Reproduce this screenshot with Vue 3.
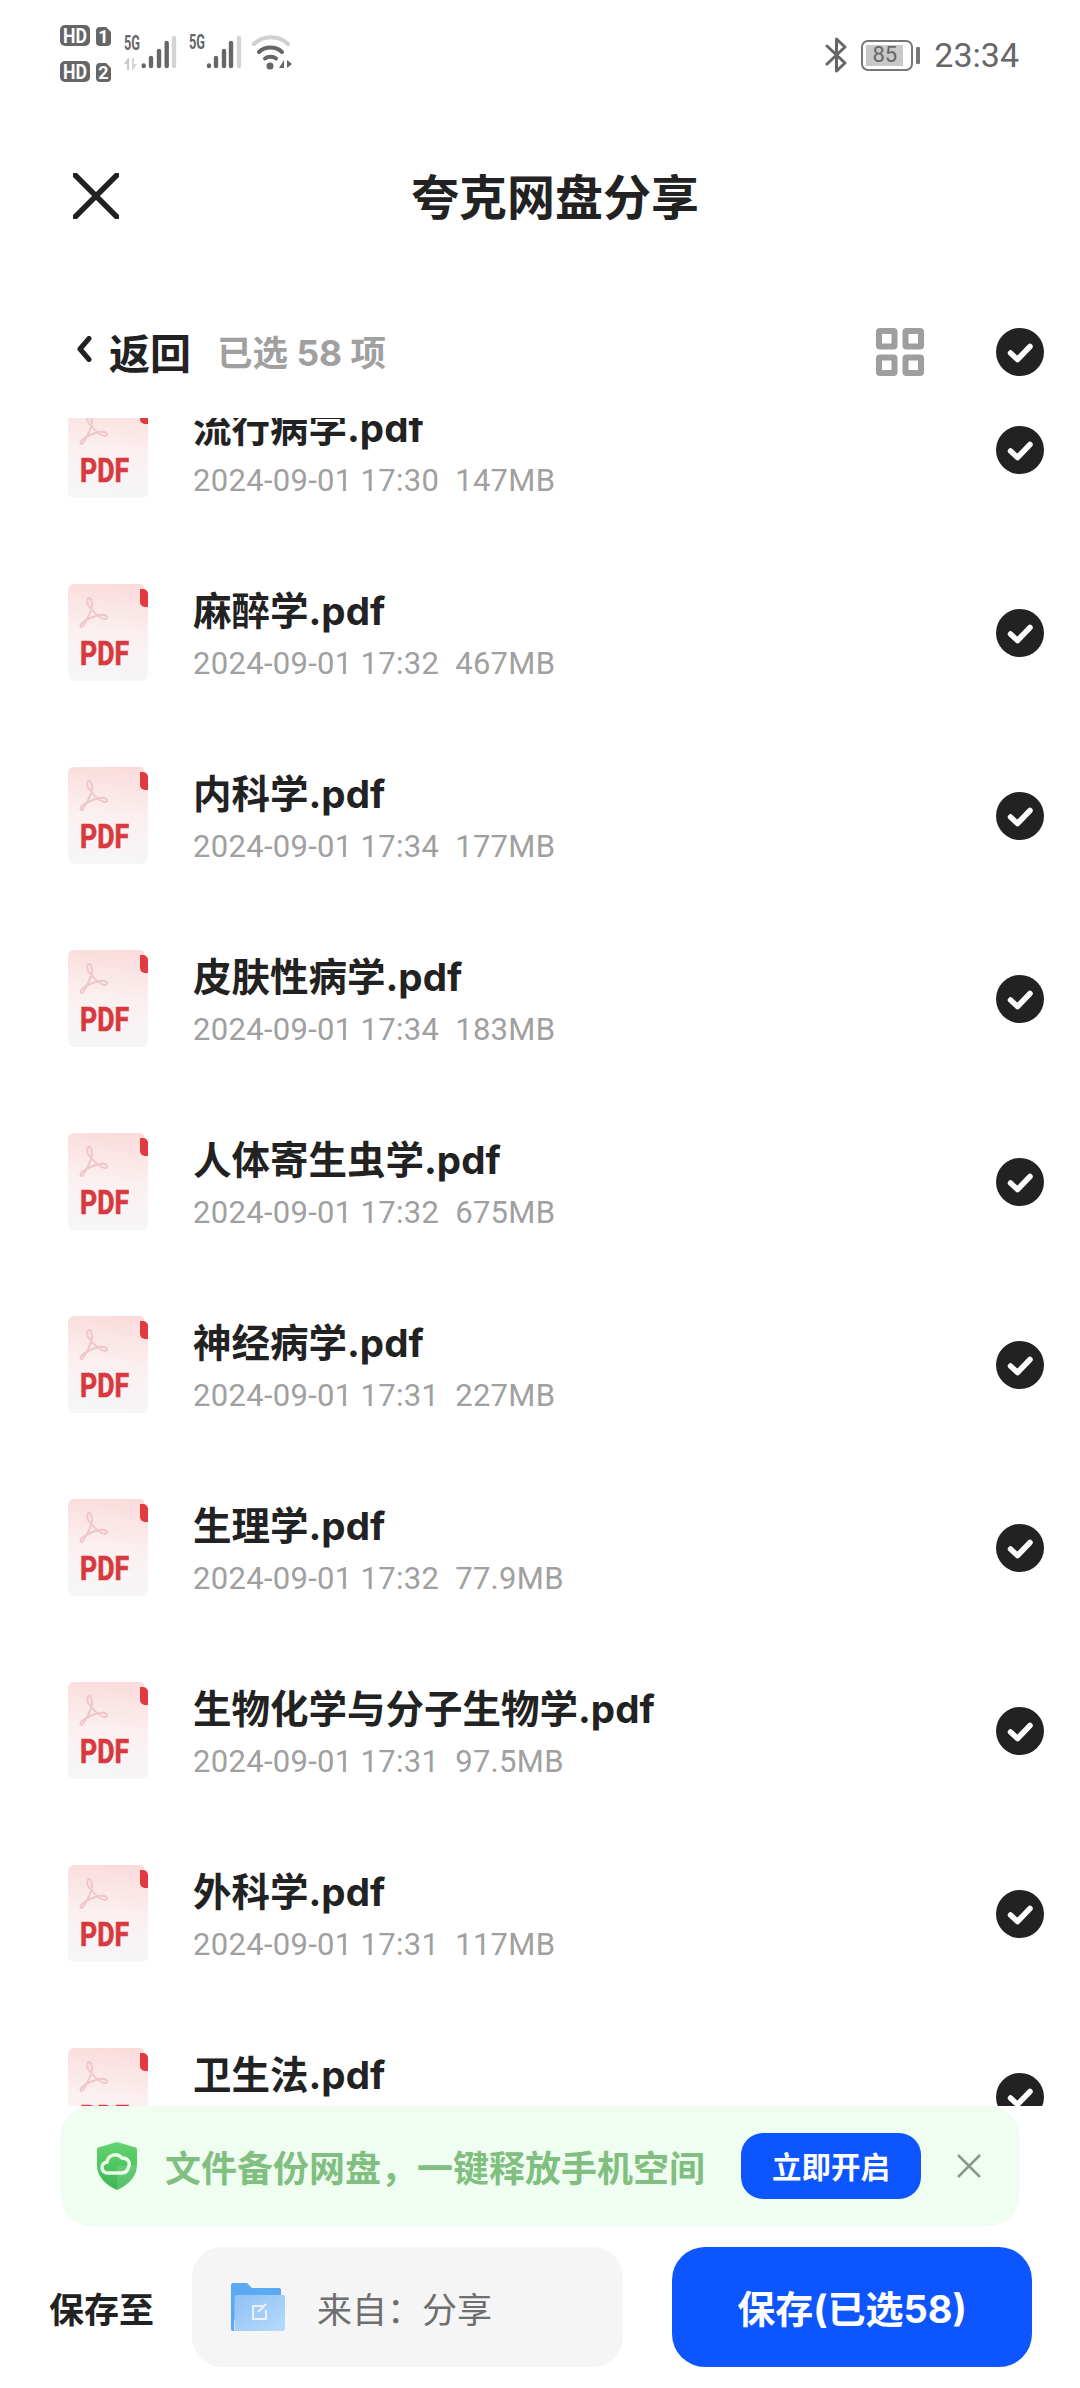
<script setup>
const files = [
  { name: '流行病学.pdf', meta: '2024-09-01 17:30  147MB' },
  { name: '麻醉学.pdf', meta: '2024-09-01 17:32  467MB' },
  { name: '内科学.pdf', meta: '2024-09-01 17:34  177MB' },
  { name: '皮肤性病学.pdf', meta: '2024-09-01 17:34  183MB' },
  { name: '人体寄生虫学.pdf', meta: '2024-09-01 17:32  675MB' },
  { name: '神经病学.pdf', meta: '2024-09-01 17:31  227MB' },
  { name: '生理学.pdf', meta: '2024-09-01 17:32  77.9MB' },
  { name: '生物化学与分子生物学.pdf', meta: '2024-09-01 17:31  97.5MB' },
  { name: '外科学.pdf', meta: '2024-09-01 17:31  117MB' },
  { name: '卫生法.pdf', meta: '' }
]
</script>

<template>
  <div class="page">
    <header class="status">
      <svg class="status-left" width="240" height="60" viewBox="60 25 240 60">
        <g fill="#666">
          <rect x="60" y="25" width="30" height="21" rx="5" />
          <path d="M96 31a4 4 0 0 1 4-4h6l5 5v10a4 4 0 0 1-4 4h-7a4 4 0 0 1-4-4z" />
          <rect x="60" y="61" width="30" height="21" rx="5" />
          <path d="M96 67a4 4 0 0 1 4-4h6l5 5v10a4 4 0 0 1-4 4h-7a4 4 0 0 1-4-4z" />
        </g>
        <g class="tag" fill="#fff">
          <text x="63" y="42.5" textLength="24" lengthAdjust="spacingAndGlyphs">HD</text>
          <text x="103.5" y="43" text-anchor="middle" class="num">1</text>
          <text x="63" y="78.5" textLength="24" lengthAdjust="spacingAndGlyphs">HD</text>
          <text x="103.5" y="79" text-anchor="middle" class="num">2</text>
        </g>
        <g class="g5" fill="#666">
          <text x="124" y="50" textLength="16" lengthAdjust="spacingAndGlyphs">5G</text>
          <text x="189" y="49" textLength="16" lengthAdjust="spacingAndGlyphs">5G</text>
        </g>
        <path d="M128 58l-4 6h3v6h2v-12z" fill="#c9c9c9" />
        <path d="M132 58h2v6h3l-4 6h-1z" fill="#d6d6d6" />
        <g stroke-width="4.4" stroke-linecap="round" fill="none">
          <path d="M143.700 65.500v.5M151 58v8M159 51v15M166.700 43v23" stroke="#666" />
          <path d="M174 38v28" stroke="#d4d4d4" />
          <path d="M209 65.500v.5M216 58v8M224 51v15M231 43v23" stroke="#666" />
          <path d="M239 38v28" stroke="#d4d4d4" />
        </g>
        <g fill="none" stroke-linecap="round" stroke-width="4">
          <path d="M254 44c9-9 25-9 34 0" stroke="#d0d0d0" />
          <path d="M259 52c6-6 17-6 23 0" stroke="#666" />
          <path d="M265 58.500c3-2.500 8-2.500 11 0" stroke="#666" />
        </g>
        <circle cx="270" cy="66" r="3.500" fill="#666" />
        <path d="M284 60v8h-5zM287 60l5 4-5 4z" fill="#666" />
      </svg>
      <div class="status-right">
        <svg width="22" height="38" viewBox="0 0 22 38" class="bt">
          <path d="M2 10l18 17-8.500 8V3L20 11 2 28" fill="none" stroke="#666" stroke-width="3" stroke-linejoin="round" stroke-linecap="round" />
        </svg>
        <div class="battery">
          <div class="cell"><span class="level">85</span></div>
          <i class="cap"></i>
        </div>
        <span class="time">23:34</span>
      </div>
    </header>

    <div class="header">
      <svg class="close" width="46" height="46" viewBox="0 0 46 46">
        <path d="M2 2l42 42M44 2L2 44" stroke="#222" stroke-width="5.500" stroke-linecap="round" fill="none" />
      </svg>
      <h1 class="title">夸克网盘分享</h1>
    </div>

    <div class="toolbar">
      <svg class="chevron" width="16" height="26" viewBox="0 0 16 26">
        <path d="M13 2.500L4 13l9 10.500" fill="none" stroke="#222" stroke-width="5" stroke-linecap="round" stroke-linejoin="round" />
      </svg>
      <span class="back">返回</span>
      <span class="count">已选 58 项</span>
      <svg class="grid" width="48" height="48" viewBox="0 0 48 48">
        <g fill="none" stroke="#9e9e9e" stroke-width="6">
          <rect x="3" y="3" width="15.500" height="15.500" rx="1" />
          <rect x="29.500" y="3" width="15.500" height="15.500" rx="1" />
          <rect x="3" y="29.500" width="15.500" height="15.500" rx="1" />
          <rect x="29.500" y="29.500" width="15.500" height="15.500" rx="1" />
        </g>
      </svg>
      <svg class="check" width="48" height="48" viewBox="0 0 48 48">
        <circle cx="24" cy="24" r="24" fill="#222" />
        <path d="M14.500 25l7 6.500 12.500-13" fill="none" stroke="#fff" stroke-width="5.500" stroke-linecap="round" stroke-linejoin="round" />
      </svg>
    </div>

    <div class="list">
      <div class="list-inner">
        <div v-for="f in files" :key="f.name" class="row">
          <svg class="pdf" width="80" height="97" viewBox="0 0 80 97">
            <defs>
              <linearGradient id="pdfbg" x1="0.55" y1="0" x2="0.45" y2="1">
                <stop offset="0" stop-color="#fbdcdc" />
                <stop offset="0.5" stop-color="#fbf0f0" />
                <stop offset="1" stop-color="#f6f6f8" />
              </linearGradient>
            </defs>
            <path d="M6 0h66a4 4 0 0 1 4 4v8h4v79a6 6 0 0 1-6 6H6a6 6 0 0 1-6-6V6a6 6 0 0 1 6-6z" fill="url(#pdfbg)" />
            <path d="M72 5h3a5 5 0 0 1 5 5v13h-3a5 5 0 0 1-5-5z" fill="#e23a3f" />
            <path d="M21 14c3 0 3 5 3 8-1 7-9 21-10 21-2 0-2-2 0-4 6-5 17-9 22-8 4 1 4 4 1 4-5 0-13-9-17-14-1-3-1-7 1-7z" fill="none" stroke="#efc6c9" stroke-width="2" />
            <text x="12" y="81" class="pdf-label" textLength="49" lengthAdjust="spacingAndGlyphs">PDF</text>
          </svg>
          <div class="info">
            <div class="name">{{ f.name }}</div>
            <div class="meta">{{ f.meta }}</div>
          </div>
          <svg class="check" width="48" height="48" viewBox="0 0 48 48">
            <circle cx="24" cy="24" r="24" fill="#222" />
            <path d="M14.500 25l7 6.500 12.500-13" fill="none" stroke="#fff" stroke-width="5.500" stroke-linecap="round" stroke-linejoin="round" />
          </svg>
        </div>
      </div>
    </div>

    <div class="banner">
      <svg class="shield" width="40" height="48" viewBox="0 0 40 48">
        <defs>
          <linearGradient id="sh" x1="0" y1="0" x2="0" y2="1">
            <stop offset="0" stop-color="#62d46e" />
            <stop offset="1" stop-color="#3cb653" />
          </linearGradient>
        </defs>
        <path d="M20 0l17 5a3 3 0 0 1 3 3v15c0 12-9 20-20 25C9 43 0 35 0 23V8a3 3 0 0 1 3-3z" fill="url(#sh)" />
        <path d="M20 24l20-1c0 12-9 20-20 25z" fill="#fff" opacity=".13" />
        <path d="M11 31a5.500 5.500 0 0 1-1-11c1-7 10-10 15-4 6 0 8 4 7 8-1 4-3 7-7 7z" fill="none" stroke="#eafbe9" stroke-width="3.500" />
      </svg>
      <span class="banner-text">文件备份网盘&#xFF0C;一键释放手机空间</span>
      <button class="enable">立即开启</button>
      <svg class="banner-close" width="24" height="24" viewBox="0 0 24 24">
        <path d="M1 1l22 22M23 1L1 23" stroke="#8b978c" stroke-width="2.500" fill="none" />
      </svg>
    </div>

    <footer class="footer">
      <span class="save-label">保存至</span>
      <div class="target">
        <svg class="folder" width="54" height="48" viewBox="0 0 54 48">
          <defs>
            <linearGradient id="fd" x1="0" y1="0" x2="1" y2="1">
              <stop offset="0" stop-color="#8fc1f5" />
              <stop offset="1" stop-color="#b6daFc" />
            </linearGradient>
          </defs>
          <path d="M2 0h14l5 5h27a2 2 0 0 1 2 2v30H0V2a2 2 0 0 1 2-2z" fill="#5aa9f2" />
          <path d="M0 40V15a3 3 0 0 1 3-3h0v36H2a2 2 0 0 1-2-2z" fill="#5aa9f2" />
          <path d="M5 12h47a2 2 0 0 1 2 2v32a2 2 0 0 1-2 2H3.500V14a2 2 0 0 1 1.500-2z" fill="url(#fd)" />
          <path d="M33 23h-11v13h13v-9M27 29l8-8" fill="none" stroke="#e6f3ff" stroke-width="2" />
        </svg>
        <span class="target-text">来自&#xFF1A;分享</span>
      </div>
      <button class="save">保存(已选58)</button>
    </footer>
  </div>
</template>

<style>
html, body { margin: 0; background: #fff; }
</style>

<style scoped>
.page {
  width: 1080px;
  height: 2388px;
  display: flex;
  flex-direction: column;
  overflow: hidden;
  background: #fff;
  font-family: "Inter", "Noto Sans CJK SC", "Noto Sans", sans-serif;
  color: #222;
}
.status {
  height: 110px;
  flex: none;
  display: flex;
  justify-content: space-between;
  padding: 25px 61px 0 60px;
  box-sizing: border-box;
}
.tag text { font: 700 21px "Roboto", sans-serif; }
.tag .num { font-size: 18px; }
.g5 text { font: 700 20px "Roboto", sans-serif; }
.status-right {
  display: flex;
  align-items: center;
  height: 60px;
}
.bt { margin-right: 14px; }
.battery { display: flex; align-items: center; margin-right: 14px; }
.cell {
  width: 52px;
  height: 31px;
  border: 2.5px solid #777;
  border-radius: 7px;
  box-sizing: border-box;
  padding: 3px 8px 3px 3px;
}
.level {
  display: block;
  height: 100%;
  background: #c8c8c8;
  font: 400 22px/20px "Roboto", sans-serif;
  color: #666;
  text-align: center;
}
.cap { display: block; width: 4px; height: 17px; margin-left: 3px; background: #777; border-radius: 1px; }
.time { font: 400 34px/1 "Roboto", sans-serif; color: #666; }
.header {
  height: 172px;
  flex: none;
  display: flex;
  align-items: center;
  padding-left: 73px;
}
.close { flex: none; }
.title {
  margin: 3px 0 0 292px;
  font-size: 48px;
  line-height: 1;
  font-weight: 700;
}
.toolbar {
  height: 136px;
  flex: none;
  display: flex;
  align-items: center;
  padding: 0 36px 0 76px;
}
.chevron { margin-right: 17px; margin-top: -2px; }
.back { font-size: 41px; font-weight: 700; line-height: 1; margin-top: 9px; }
.count { font-size: 35.500px; font-weight: 700; color: #a0a0a0; line-height: 1; margin: 8px 0 0 26px; }
.grid { margin-left: auto; margin-top: 4px; }
.toolbar .check { margin-left: 72px; margin-top: 4px; }
.list { flex: 1; min-height: 0; overflow: hidden; }
.list-inner { margin-top: -60px; }
.row {
  height: 183px;
  display: flex;
  align-items: center;
  padding: 0 36px 0 68px;
  box-sizing: border-box;
}
.pdf { flex: none; }
.pdf-label { font: 700 33px "Roboto", sans-serif; fill: #d8393e; stroke: #d8393e; stroke-width: .7px; }
.info { flex: 1; margin-left: 45px; }
.name { font-size: 38.500px; line-height: 50px; font-weight: 700; margin-top: 5px; white-space: nowrap; }
.meta {
  font: 400 31px/40px "Roboto", sans-serif;
  letter-spacing: .3px;
  color: #a0a0a0;
  white-space: pre;
  min-height: 40px;
  margin-top: 8px;
}
.check { flex: none; }
.banner {
  height: 120px;
  flex: none;
  margin: 0 61px;
  box-sizing: border-box;
  background: #f0fdf1;
  border: 1px solid #eefaf0;
  border-radius: 30px;
  display: flex;
  align-items: center;
  padding-left: 35px;
}
.shield { flex: none; }
.banner-text { font-size: 36px; font-weight: 700; color: #80bf80; margin-left: 28px; white-space: nowrap; line-height: 1; width: 536px; font-family: "Noto Sans CJK SC", sans-serif; }
.enable {
  width: 180px;
  height: 66px;
  margin-left: 40px;
  border: 0;
  padding: 0;
  border-radius: 22px;
  background: #0d55ff;
  color: #fff;
  font: 700 29.500px/1 "Noto Sans CJK SC", sans-serif;
  flex: none;
}
.banner-close { margin-left: 36px; flex: none; }
.footer {
  margin-top: 21px;
  height: 120px;
  flex: none;
  margin-bottom: 21px;
  display: flex;
  align-items: center;
  padding-left: 49px;
}
.save-label { font-size: 35px; font-weight: 700; width: 143px; flex: none; line-height: 1; font-family: "Noto Sans CJK SC", sans-serif; }
.target {
  width: 431px;
  height: 120px;
  flex: none;
  box-sizing: border-box;
  background: #f5f5f5;
  border-radius: 30px;
  display: flex;
  align-items: center;
  padding-left: 39px;
}
.target-text { margin-left: 32px; font-size: 35px; color: #6e6e6e; line-height: 1; font-family: "Noto Sans CJK SC", sans-serif; }
.save {
  width: 360px;
  height: 120px;
  flex: none;
  margin-left: 49px;
  padding: 4px 0 0;
  border: 0;
  border-radius: 33px;
  background: #0d55ff;
  color: #fff;
  font: 700 38px/1 "Inter", "Noto Sans CJK SC", sans-serif;
}
</style>
